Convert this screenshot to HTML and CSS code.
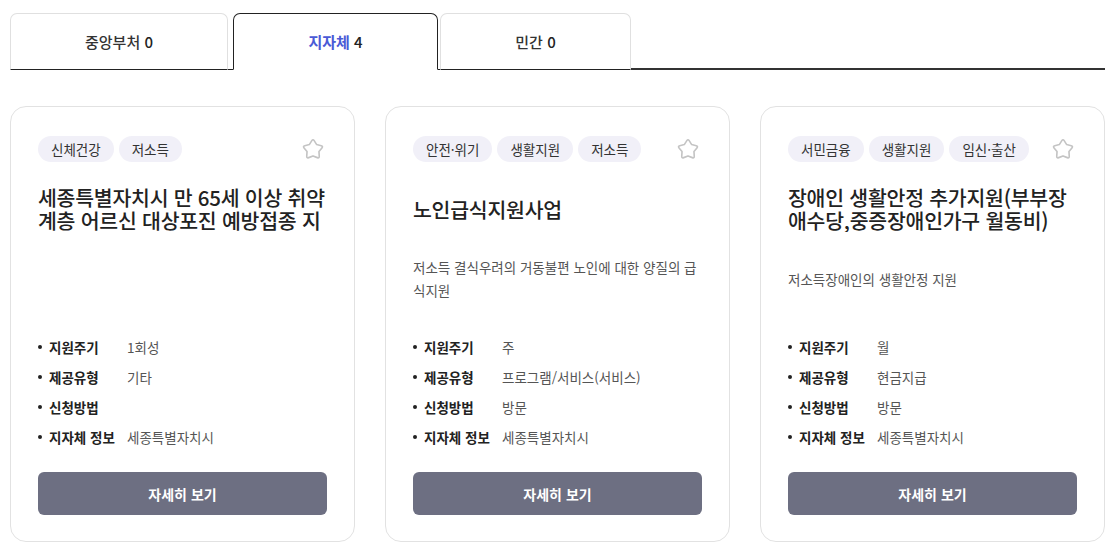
FILE: index.html
```html
<!DOCTYPE html>
<html lang="ko">
<head>
<meta charset="utf-8">
<title>지원사업</title>
<link rel="stylesheet" href="styles.css">
</head>
<body>
<nav class="tabs">
  <button class="tab tab-1">중앙부처 <span class="num">0</span></button>
  <button class="tab tab-2 active"><span class="hl">지자체</span> <span class="num">4</span></button>
  <button class="tab tab-3">민간 <span class="num">0</span></button>
  <div class="tab-fill"></div>
</nav>

<main class="cards">
  <article class="card">
    <div class="card-top">
      <span class="tag">신체건강</span>
      <span class="tag">저소득</span>
      <svg class="star" viewBox="0 0 24 24" width="26" height="26"><path d="M10.92 4.28 Q12 2.6 13.08 4.28 L15.41 7.91 L19.58 9.00 Q21.51 9.51 20.25 11.06 L17.52 14.39 L17.77 18.69 Q17.88 20.69 16.02 19.96 L12 18.4 L7.98 19.96 Q6.12 20.69 6.23 18.69 L6.48 14.39 L3.75 11.06 Q2.49 9.51 4.42 9.00 L8.59 7.91 Z"/></svg>
    </div>
    <div class="title-box"><h2 class="title">세종특별자치시 만 65세 이상 취약계층 어르신 대상포진 예방접종 지원</h2></div>
    <div class="desc-box"></div>
    <ul class="info">
      <li><span class="label">지원주기</span><span class="value">1회성</span></li>
      <li><span class="label">제공유형</span><span class="value">기타</span></li>
      <li><span class="label">신청방법</span><span class="value"></span></li>
      <li><span class="label">지자체 정보</span><span class="value">세종특별자치시</span></li>
    </ul>
    <button class="btn">자세히 보기</button>
  </article>

  <article class="card">
    <div class="card-top">
      <span class="tag">안전·위기</span>
      <span class="tag">생활지원</span>
      <span class="tag">저소득</span>
      <svg class="star" viewBox="0 0 24 24" width="26" height="26"><path d="M10.92 4.28 Q12 2.6 13.08 4.28 L15.41 7.91 L19.58 9.00 Q21.51 9.51 20.25 11.06 L17.52 14.39 L17.77 18.69 Q17.88 20.69 16.02 19.96 L12 18.4 L7.98 19.96 Q6.12 20.69 6.23 18.69 L6.48 14.39 L3.75 11.06 Q2.49 9.51 4.42 9.00 L8.59 7.91 Z"/></svg>
    </div>
    <div class="title-box"><h2 class="title">노인급식지원사업</h2></div>
    <div class="desc-box"><p class="desc">저소득 결식우려의 거동불편 노인에 대한 양질의 급식지원</p></div>
    <ul class="info">
      <li><span class="label">지원주기</span><span class="value">주</span></li>
      <li><span class="label">제공유형</span><span class="value">프로그램/서비스(서비스)</span></li>
      <li><span class="label">신청방법</span><span class="value">방문</span></li>
      <li><span class="label">지자체 정보</span><span class="value">세종특별자치시</span></li>
    </ul>
    <button class="btn">자세히 보기</button>
  </article>

  <article class="card">
    <div class="card-top">
      <span class="tag">서민금융</span>
      <span class="tag">생활지원</span>
      <span class="tag">임신·출산</span>
      <svg class="star" viewBox="0 0 24 24" width="26" height="26"><path d="M10.92 4.28 Q12 2.6 13.08 4.28 L15.41 7.91 L19.58 9.00 Q21.51 9.51 20.25 11.06 L17.52 14.39 L17.77 18.69 Q17.88 20.69 16.02 19.96 L12 18.4 L7.98 19.96 Q6.12 20.69 6.23 18.69 L6.48 14.39 L3.75 11.06 Q2.49 9.51 4.42 9.00 L8.59 7.91 Z"/></svg>
    </div>
    <div class="title-box"><h2 class="title">장애인 생활안정 추가지원(부부장애수당,중증장애인가구 월동비)</h2></div>
    <div class="desc-box"><p class="desc">저소득장애인의 생활안정 지원</p></div>
    <ul class="info">
      <li><span class="label">지원주기</span><span class="value">월</span></li>
      <li><span class="label">제공유형</span><span class="value">현금지급</span></li>
      <li><span class="label">신청방법</span><span class="value">방문</span></li>
      <li><span class="label">지자체 정보</span><span class="value">세종특별자치시</span></li>
    </ul>
    <button class="btn">자세히 보기</button>
  </article>
</main>
</body>
</html>
```

FILE: styles.css
```css
* { box-sizing: border-box; }

body {
  margin: 0;
  background: #fff;
  font-family: "Noto Sans CJK KR", "Noto Sans", sans-serif;
  color: #222;
}

.tabs {
  display: flex;
  align-items: flex-end;
  margin: 13px 7px 0 10px;
  box-shadow: inset 0 -1px 0 #222;
}

.tab {
  height: 57px;
  background: #fff;
  border: 1px solid #e0e0e0;
  border-bottom: 1px solid #222;
  border-radius: 7px 7px 0 0;
  font-family: inherit;
  font-size: 15px;
  font-weight: 500;
  color: #333;
  padding: 0;
  cursor: pointer;
}

.tab-1 { width: 218px; }
.tab-2 { width: 205px; margin-left: 5px; }
.tab-3 { width: 191px; margin-left: 2px; }

.tab.active {
  border-color: #222;
  border-bottom-color: #fff;
}

.tab .hl { color: #4a5ad6; font-weight: 700; }
.tab .num { color: #222; }

.tab-fill {
  flex: 1;
  height: 2px;
  background: #333;
}

.cards {
  display: grid;
  grid-template-columns: repeat(3, 345px);
  gap: 30px;
  margin: 36px 0 0 10px;
}

.card {
  border: 1px solid #e2e2e2;
  border-radius: 16px;
  padding: 29px 27px 26px;
  display: flex;
  flex-direction: column;
}

.card-top {
  display: flex;
  align-items: center;
  gap: 5px;
  height: 26px;
}

.tag {
  height: 26px;
  line-height: 26px;
  padding: 0 13px;
  border-radius: 13px;
  background: #f1f0f8;
  font-size: 13.5px;
  color: #333;
}

.star {
  margin-left: auto;
  margin-right: 1px;
  fill: none;
  stroke: #c4c4c4;
  stroke-width: 1.5;
  stroke-linejoin: round;
}

.title-box {
  margin-top: 10px;
  height: 74px;
  display: flex;
  align-items: center;
}

.title {
  margin: 0;
  font-size: 20.5px;
  font-weight: 500;
  letter-spacing: -0.25px;
  line-height: 23px;
  max-height: 46px;
  overflow: hidden;
  word-break: break-all;
  color: #222;
}

.desc-box {
  height: 66px;
  display: flex;
  align-items: center;
}

.desc {
  margin: 0;
  font-size: 13.5px;
  line-height: 23px;
  color: #555;
  word-break: break-all;
}

.info {
  list-style: none;
  margin: 20px 0 0;
  padding: 0;
}

.info li {
  display: flex;
  align-items: center;
  height: 30px;
  font-size: 13.5px;
}

.info li::before {
  content: "";
  width: 4px;
  height: 4px;
  border-radius: 50%;
  background: #222;
  margin-right: 7px;
}

.label {
  width: 78px;
  font-weight: 700;
  color: #222;
}

.value {
  color: #555;
}

.btn {
  margin-top: 20px;
  height: 43px;
  border: 0;
  border-radius: 6px;
  background: #6d6f82;
  color: #fff;
  font-family: inherit;
  font-size: 14px;
  font-weight: 700;
  cursor: pointer;
}
```
